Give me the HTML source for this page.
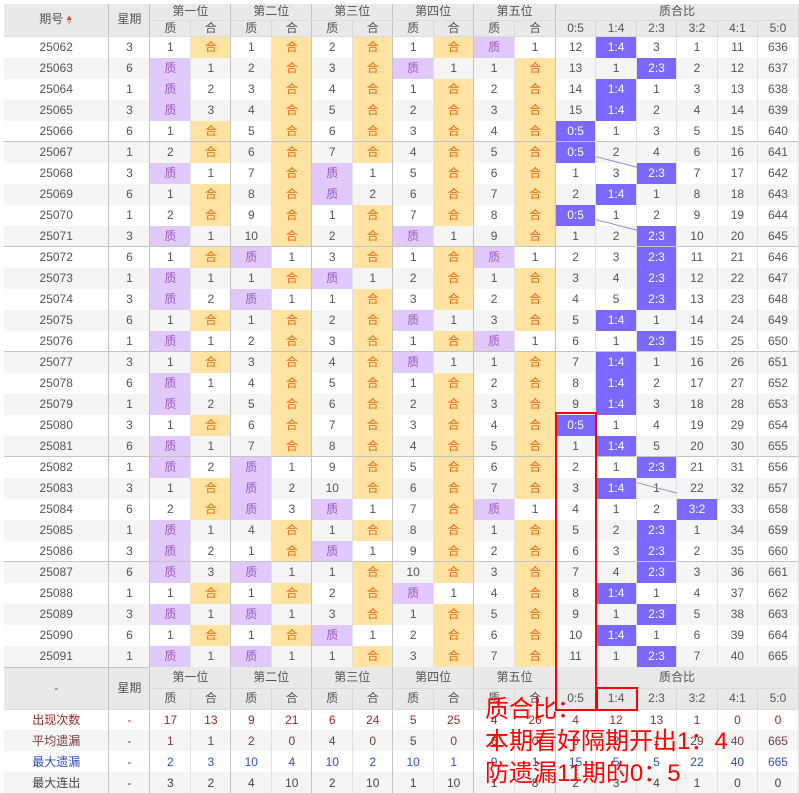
<!DOCTYPE html>
<html><head><meta charset="utf-8"><style>
body{margin:0;background:#fff;width:799px;height:793px;overflow:hidden;position:relative}
table{border-collapse:collapse;table-layout:fixed;position:absolute;left:4px;top:4px;font:12px "Liberation Sans","Noto Sans CJK SC",sans-serif;color:#555}
td,th{padding:0;text-align:center;white-space:nowrap;overflow:hidden}
th{background:#e9e9e9;font-weight:normal;color:#555;border-right:1px solid #d8d8d8;border-bottom:1px solid #dcdcdc;line-height:13px}
thead th{height:14px}
th.b{border-right:1px solid #c4c4c4}
tbody.d tr{height:21px}
tbody.d td{height:21px;line-height:14px;border-right:1px solid #e2e2e2}
tbody.d tr:nth-child(even) td{background:#f5f5f5}
tbody.d td:nth-child(1),tbody.d td:nth-child(2),tbody.d td:nth-child(4),tbody.d td:nth-child(6),tbody.d td:nth-child(8),tbody.d td:nth-child(10),tbody.d td:nth-child(12){border-right:1px solid #c4c4c4}
tbody.d tr.g td{box-shadow:inset 0 -1px #c4c4c4}
tbody.d tr td.z{background:#e2c9fb;color:#9a5cc0}
tbody.d tr td.h{background:#ffe3a2;color:#f26a10}
tbody.d tr td.p{background:#7b68ff;color:#fff}
tbody.s tr{height:21px}
tbody.s td{border-right:1px solid #e2e2e2;line-height:14px}
tbody.s tr:nth-child(even) td{background:#f5f5f5}
tbody.s td:nth-child(1),tbody.s td:nth-child(2),tbody.s td:nth-child(4),tbody.s td:nth-child(6),tbody.s td:nth-child(8),tbody.s td:nth-child(10),tbody.s td:nth-child(12){border-right:1px solid #c4c4c4}
.r1 td{color:#a02828}.r2 td{color:#7a3a3a}.r3 td{color:#2f4fc0}.r4 td{color:#444}
.tri{display:inline-block;vertical-align:middle;margin-left:2px;font-size:8px;line-height:5px;color:#e33}
.ov{position:absolute;left:485px;top:694px;font:24px/32px "Liberation Sans","Noto Sans CJK SC",sans-serif;color:#ff0000;white-space:nowrap}
.box{position:absolute;border:2px solid #f00;box-sizing:border-box}
</style></head><body>
<table>
<colgroup><col style="width:105px"><col style="width:41px"><col style="width:41px"><col style="width:40px"><col style="width:41px"><col style="width:40px"><col style="width:41px"><col style="width:40px"><col style="width:41px"><col style="width:40px"><col style="width:41px"><col style="width:41px"><col style="width:40px"><col style="width:41px"><col style="width:40px"><col style="width:41px"><col style="width:40px"><col style="width:41px"></colgroup>
<thead>
<tr style="height:16px"><th rowspan="2" class="b">期号<span class="tri">▲<br><span style="color:#bbb">▼</span></span></th><th rowspan="2" class="b">星期</th><th colspan="2" class="b">第一位</th><th colspan="2" class="b">第二位</th><th colspan="2" class="b">第三位</th><th colspan="2" class="b">第四位</th><th colspan="2" class="b">第五位</th><th colspan="6">质合比</th></tr>
<tr style="height:16px"><th>质</th><th class="b">合</th><th>质</th><th class="b">合</th><th>质</th><th class="b">合</th><th>质</th><th class="b">合</th><th>质</th><th class="b">合</th><th>0:5</th><th>1:4</th><th>2:3</th><th>3:2</th><th>4:1</th><th>5:0</th></tr>
</thead>
<tbody class="d">
<tr><td>25062</td><td>3</td><td>1</td><td class="h">合</td><td>1</td><td class="h">合</td><td>2</td><td class="h">合</td><td>1</td><td class="h">合</td><td class="z">质</td><td>1</td><td>12</td><td class="p">1:4</td><td>3</td><td>1</td><td>11</td><td>636</td></tr>
<tr><td>25063</td><td>6</td><td class="z">质</td><td>1</td><td>2</td><td class="h">合</td><td>3</td><td class="h">合</td><td class="z">质</td><td>1</td><td>1</td><td class="h">合</td><td>13</td><td>1</td><td class="p">2:3</td><td>2</td><td>12</td><td>637</td></tr>
<tr><td>25064</td><td>1</td><td class="z">质</td><td>2</td><td>3</td><td class="h">合</td><td>4</td><td class="h">合</td><td>1</td><td class="h">合</td><td>2</td><td class="h">合</td><td>14</td><td class="p">1:4</td><td>1</td><td>3</td><td>13</td><td>638</td></tr>
<tr><td>25065</td><td>3</td><td class="z">质</td><td>3</td><td>4</td><td class="h">合</td><td>5</td><td class="h">合</td><td>2</td><td class="h">合</td><td>3</td><td class="h">合</td><td>15</td><td class="p">1:4</td><td>2</td><td>4</td><td>14</td><td>639</td></tr>
<tr class="g"><td>25066</td><td>6</td><td>1</td><td class="h">合</td><td>5</td><td class="h">合</td><td>6</td><td class="h">合</td><td>3</td><td class="h">合</td><td>4</td><td class="h">合</td><td class="p">0:5</td><td>1</td><td>3</td><td>5</td><td>15</td><td>640</td></tr>
<tr><td>25067</td><td>1</td><td>2</td><td class="h">合</td><td>6</td><td class="h">合</td><td>7</td><td class="h">合</td><td>4</td><td class="h">合</td><td>5</td><td class="h">合</td><td class="p">0:5</td><td>2</td><td>4</td><td>6</td><td>16</td><td>641</td></tr>
<tr><td>25068</td><td>3</td><td class="z">质</td><td>1</td><td>7</td><td class="h">合</td><td class="z">质</td><td>1</td><td>5</td><td class="h">合</td><td>6</td><td class="h">合</td><td>1</td><td>3</td><td class="p">2:3</td><td>7</td><td>17</td><td>642</td></tr>
<tr><td>25069</td><td>6</td><td>1</td><td class="h">合</td><td>8</td><td class="h">合</td><td class="z">质</td><td>2</td><td>6</td><td class="h">合</td><td>7</td><td class="h">合</td><td>2</td><td class="p">1:4</td><td>1</td><td>8</td><td>18</td><td>643</td></tr>
<tr><td>25070</td><td>1</td><td>2</td><td class="h">合</td><td>9</td><td class="h">合</td><td>1</td><td class="h">合</td><td>7</td><td class="h">合</td><td>8</td><td class="h">合</td><td class="p">0:5</td><td>1</td><td>2</td><td>9</td><td>19</td><td>644</td></tr>
<tr class="g"><td>25071</td><td>3</td><td class="z">质</td><td>1</td><td>10</td><td class="h">合</td><td>2</td><td class="h">合</td><td class="z">质</td><td>1</td><td>9</td><td class="h">合</td><td>1</td><td>2</td><td class="p">2:3</td><td>10</td><td>20</td><td>645</td></tr>
<tr><td>25072</td><td>6</td><td>1</td><td class="h">合</td><td class="z">质</td><td>1</td><td>3</td><td class="h">合</td><td>1</td><td class="h">合</td><td class="z">质</td><td>1</td><td>2</td><td>3</td><td class="p">2:3</td><td>11</td><td>21</td><td>646</td></tr>
<tr><td>25073</td><td>1</td><td class="z">质</td><td>1</td><td>1</td><td class="h">合</td><td class="z">质</td><td>1</td><td>2</td><td class="h">合</td><td>1</td><td class="h">合</td><td>3</td><td>4</td><td class="p">2:3</td><td>12</td><td>22</td><td>647</td></tr>
<tr><td>25074</td><td>3</td><td class="z">质</td><td>2</td><td class="z">质</td><td>1</td><td>1</td><td class="h">合</td><td>3</td><td class="h">合</td><td>2</td><td class="h">合</td><td>4</td><td>5</td><td class="p">2:3</td><td>13</td><td>23</td><td>648</td></tr>
<tr><td>25075</td><td>6</td><td>1</td><td class="h">合</td><td>1</td><td class="h">合</td><td>2</td><td class="h">合</td><td class="z">质</td><td>1</td><td>3</td><td class="h">合</td><td>5</td><td class="p">1:4</td><td>1</td><td>14</td><td>24</td><td>649</td></tr>
<tr class="g"><td>25076</td><td>1</td><td class="z">质</td><td>1</td><td>2</td><td class="h">合</td><td>3</td><td class="h">合</td><td>1</td><td class="h">合</td><td class="z">质</td><td>1</td><td>6</td><td>1</td><td class="p">2:3</td><td>15</td><td>25</td><td>650</td></tr>
<tr><td>25077</td><td>3</td><td>1</td><td class="h">合</td><td>3</td><td class="h">合</td><td>4</td><td class="h">合</td><td class="z">质</td><td>1</td><td>1</td><td class="h">合</td><td>7</td><td class="p">1:4</td><td>1</td><td>16</td><td>26</td><td>651</td></tr>
<tr><td>25078</td><td>6</td><td class="z">质</td><td>1</td><td>4</td><td class="h">合</td><td>5</td><td class="h">合</td><td>1</td><td class="h">合</td><td>2</td><td class="h">合</td><td>8</td><td class="p">1:4</td><td>2</td><td>17</td><td>27</td><td>652</td></tr>
<tr><td>25079</td><td>1</td><td class="z">质</td><td>2</td><td>5</td><td class="h">合</td><td>6</td><td class="h">合</td><td>2</td><td class="h">合</td><td>3</td><td class="h">合</td><td>9</td><td class="p">1:4</td><td>3</td><td>18</td><td>28</td><td>653</td></tr>
<tr><td>25080</td><td>3</td><td>1</td><td class="h">合</td><td>6</td><td class="h">合</td><td>7</td><td class="h">合</td><td>3</td><td class="h">合</td><td>4</td><td class="h">合</td><td class="p">0:5</td><td>1</td><td>4</td><td>19</td><td>29</td><td>654</td></tr>
<tr class="g"><td>25081</td><td>6</td><td class="z">质</td><td>1</td><td>7</td><td class="h">合</td><td>8</td><td class="h">合</td><td>4</td><td class="h">合</td><td>5</td><td class="h">合</td><td>1</td><td class="p">1:4</td><td>5</td><td>20</td><td>30</td><td>655</td></tr>
<tr><td>25082</td><td>1</td><td class="z">质</td><td>2</td><td class="z">质</td><td>1</td><td>9</td><td class="h">合</td><td>5</td><td class="h">合</td><td>6</td><td class="h">合</td><td>2</td><td>1</td><td class="p">2:3</td><td>21</td><td>31</td><td>656</td></tr>
<tr><td>25083</td><td>3</td><td>1</td><td class="h">合</td><td class="z">质</td><td>2</td><td>10</td><td class="h">合</td><td>6</td><td class="h">合</td><td>7</td><td class="h">合</td><td>3</td><td class="p">1:4</td><td>1</td><td>22</td><td>32</td><td>657</td></tr>
<tr><td>25084</td><td>6</td><td>2</td><td class="h">合</td><td class="z">质</td><td>3</td><td class="z">质</td><td>1</td><td>7</td><td class="h">合</td><td class="z">质</td><td>1</td><td>4</td><td>1</td><td>2</td><td class="p">3:2</td><td>33</td><td>658</td></tr>
<tr><td>25085</td><td>1</td><td class="z">质</td><td>1</td><td>4</td><td class="h">合</td><td>1</td><td class="h">合</td><td>8</td><td class="h">合</td><td>1</td><td class="h">合</td><td>5</td><td>2</td><td class="p">2:3</td><td>1</td><td>34</td><td>659</td></tr>
<tr class="g"><td>25086</td><td>3</td><td class="z">质</td><td>2</td><td>1</td><td class="h">合</td><td class="z">质</td><td>1</td><td>9</td><td class="h">合</td><td>2</td><td class="h">合</td><td>6</td><td>3</td><td class="p">2:3</td><td>2</td><td>35</td><td>660</td></tr>
<tr><td>25087</td><td>6</td><td class="z">质</td><td>3</td><td class="z">质</td><td>1</td><td>1</td><td class="h">合</td><td>10</td><td class="h">合</td><td>3</td><td class="h">合</td><td>7</td><td>4</td><td class="p">2:3</td><td>3</td><td>36</td><td>661</td></tr>
<tr><td>25088</td><td>1</td><td>1</td><td class="h">合</td><td>1</td><td class="h">合</td><td>2</td><td class="h">合</td><td class="z">质</td><td>1</td><td>4</td><td class="h">合</td><td>8</td><td class="p">1:4</td><td>1</td><td>4</td><td>37</td><td>662</td></tr>
<tr><td>25089</td><td>3</td><td class="z">质</td><td>1</td><td class="z">质</td><td>1</td><td>3</td><td class="h">合</td><td>1</td><td class="h">合</td><td>5</td><td class="h">合</td><td>9</td><td>1</td><td class="p">2:3</td><td>5</td><td>38</td><td>663</td></tr>
<tr><td>25090</td><td>6</td><td>1</td><td class="h">合</td><td>1</td><td class="h">合</td><td class="z">质</td><td>1</td><td>2</td><td class="h">合</td><td>6</td><td class="h">合</td><td>10</td><td class="p">1:4</td><td>1</td><td>6</td><td>39</td><td>664</td></tr>
<tr><td>25091</td><td>1</td><td class="z">质</td><td>1</td><td class="z">质</td><td>1</td><td>1</td><td class="h">合</td><td>3</td><td class="h">合</td><td>7</td><td class="h">合</td><td>11</td><td>1</td><td class="p">2:3</td><td>7</td><td>40</td><td>665</td></tr>
</tbody>
<tbody>
<tr style="height:21px"><th rowspan="2" class="b" style="border-top:1px solid #c4c4c4">-</th><th rowspan="2" class="b" style="border-top:1px solid #c4c4c4">星期</th><th colspan="2" class="b">第一位</th><th colspan="2" class="b">第二位</th><th colspan="2" class="b">第三位</th><th colspan="2" class="b">第四位</th><th colspan="2" class="b">第五位</th><th colspan="6">质合比</th></tr>
<tr style="height:21px"><th>质</th><th class="b">合</th><th>质</th><th class="b">合</th><th>质</th><th class="b">合</th><th>质</th><th class="b">合</th><th>质</th><th class="b">合</th><th>0:5</th><th>1:4</th><th>2:3</th><th>3:2</th><th>4:1</th><th>5:0</th></tr>
</tbody>
<tbody class="s">
<tr class="r1"><td>出现次数</td><td>-</td><td>17</td><td>13</td><td>9</td><td>21</td><td>6</td><td>24</td><td>5</td><td>25</td><td>4</td><td>26</td><td>4</td><td>12</td><td>13</td><td>1</td><td>0</td><td>0</td></tr>
<tr class="r2"><td>平均遗漏</td><td>-</td><td>1</td><td>1</td><td>2</td><td>0</td><td>4</td><td>0</td><td>5</td><td>0</td><td>6</td><td>0</td><td>6</td><td>2</td><td>1</td><td>29</td><td>40</td><td>665</td></tr>
<tr class="r3"><td>最大遗漏</td><td>-</td><td>2</td><td>3</td><td>10</td><td>4</td><td>10</td><td>2</td><td>10</td><td>1</td><td>9</td><td>1</td><td>15</td><td>5</td><td>5</td><td>22</td><td>40</td><td>665</td></tr>
<tr class="r4"><td>最大连出</td><td>-</td><td>3</td><td>2</td><td>4</td><td>10</td><td>2</td><td>10</td><td>1</td><td>10</td><td>1</td><td>8</td><td>2</td><td>3</td><td>4</td><td>1</td><td>0</td><td>0</td></tr>
</tbody>
</table>
<svg width="799" height="793" style="position:absolute;left:0;top:0" >
<g stroke="#8f8fd0" stroke-width="1">
<line x1="596" y1="156.7" x2="637" y2="167.2"/>
<line x1="596" y1="219.7" x2="637" y2="230.2"/>
<line x1="637" y1="482.7" x2="677" y2="493.1"/>
</g>
</svg>
<div class="box" style="left:555px;top:412px;width:42px;height:299px"></div>
<div class="box" style="left:596px;top:687px;width:42px;height:24px"></div>
<div class="ov">质合比：<br>本期看好隔期开出1：4<br>防遗漏11期的0：5</div>
</body></html>
